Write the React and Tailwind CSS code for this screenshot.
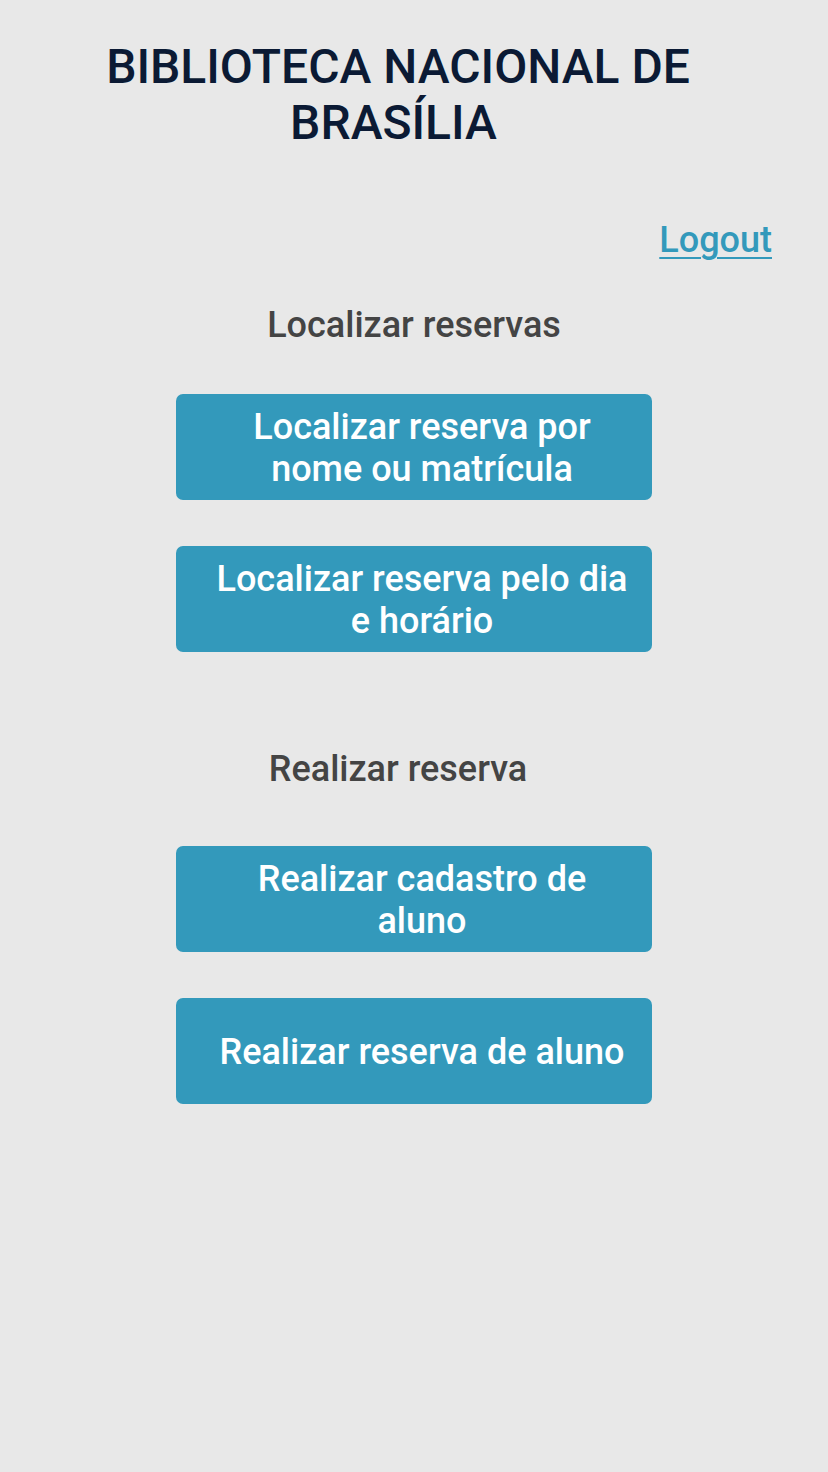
import React from 'react';

const font = { fontFamily: 'Roboto, "Noto Sans", sans-serif' };

function ActionButton({ children }) {
  return (
    <button className="w-[476px] h-[106px] rounded-[7px] bg-[#3399bb] text-white flex items-center justify-center pl-[37px] pr-[21px] pt-[2px] text-[36px] leading-[42px] font-medium text-center">
      <span>{children}</span>
    </button>
  );
}

export default function App() {
  return (
    <div className="min-h-[1472px] w-full bg-[#e8e8e8] flex flex-col" style={font}>
      <h1 className="pt-[39px] pr-[32px] text-center text-[48px] leading-[56px] font-medium text-[#0b1a34]">
        <span className="block">BIBLIOTECA NACIONAL DE</span>
        <span className="block pr-[9px]">BRASÍLIA</span>
      </h1>

      <div className="mt-[68px] flex justify-end pr-[56px]">
        <a href="#" className="text-[36px] leading-[42px] font-medium text-[#3399bb] underline underline-offset-[5px] decoration-2">
          Logout
        </a>
      </div>

      <h2 className="mt-[43px] text-center text-[36px] leading-[42px] font-medium text-[#444444]">
        Localizar reservas
      </h2>

      <div className="mt-[48px] flex flex-col items-center gap-[46px]">
        <ActionButton>Localizar reserva por nome ou matrícula</ActionButton>
        <ActionButton>Localizar reserva pelo dia e horário</ActionButton>
      </div>

      <h2 className="mt-[96px] pr-[32px] text-center text-[36px] leading-[42px] font-medium text-[#444444]">
        Realizar reserva
      </h2>

      <div className="mt-[56px] flex flex-col items-center gap-[46px]">
        <ActionButton>Realizar cadastro de aluno</ActionButton>
        <ActionButton>Realizar reserva de aluno</ActionButton>
      </div>
    </div>
  );
}
